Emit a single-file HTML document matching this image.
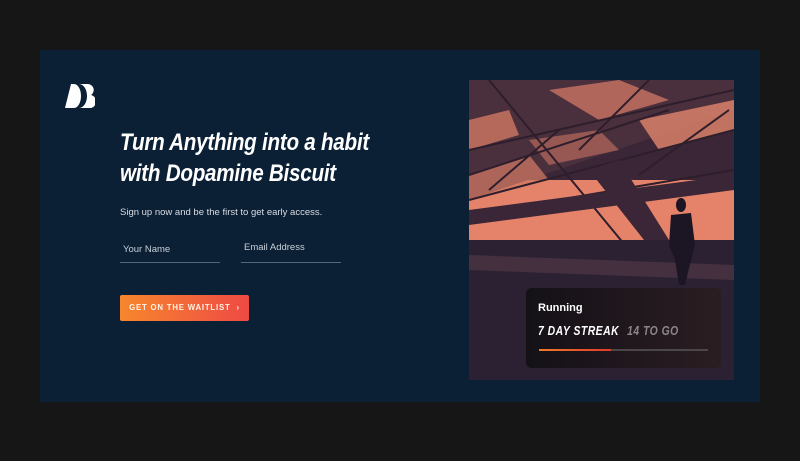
<!DOCTYPE html>
<html><head><meta charset="utf-8"><style>
*{margin:0;padding:0;box-sizing:border-box}
body{width:800px;height:461px;background:#161616;position:relative;overflow:hidden;font-family:"Liberation Sans",sans-serif}
.panel{position:absolute;left:40px;top:50px;width:720px;height:352px;background:#0b1f35}
.logo{position:absolute;left:65px;top:84px}
h1{position:absolute;left:120px;top:127px;color:#fff;font-style:italic;font-weight:700;font-size:24px;line-height:31px;letter-spacing:-0.3px;transform:scaleX(0.86);transform-origin:left;white-space:nowrap}
.sub{position:absolute;left:120px;top:207px;color:#d8dde4;font-size:9.5px}
.field{position:absolute;top:244px;width:100px;height:19px;border-bottom:1px solid #55657a;color:#c9d0d8;font-size:9.5px;padding-left:3px}
.btn{position:absolute;left:120px;top:295px;width:129px;height:26px;border-radius:2px;background:linear-gradient(90deg,#f7862d,#ee4a44);font-size:7.8px;font-weight:700;letter-spacing:0.8px;line-height:26px;text-align:center;color:#fff3e8}
.photo{position:absolute;left:469px;top:80px;width:265px;height:300px;overflow:hidden;background:#3a2636}
.card{position:absolute;left:526px;top:288px;width:195px;height:80px;border-radius:5px;background:linear-gradient(90deg,#141117,#2a1d22);}
.card .t{position:absolute;left:12px;top:14px;color:#fff;font-size:11px;font-weight:700}
.card .s{position:absolute;left:12px;top:35px;color:#fff;font-size:13px;font-weight:700;font-style:italic;letter-spacing:0.6px;transform:scaleX(0.8);transform-origin:left;white-space:nowrap}
.card .s span{color:#8c8588;margin-left:10px}
.bar{position:absolute;left:13px;top:61px;width:169px;height:2px;background:#4b4648}
.bar i{position:absolute;left:0;top:0;width:72px;height:2px;background:linear-gradient(90deg,#f07a2a,#e23a2a)}
</style></head><body>
<div class="panel"></div>
<svg class="logo" width="30" height="24" viewBox="0 0 30 24"><path d="M6 0 H9 A7 12 0 0 1 9 24 H0 Z" fill="#fff"/><path d="M14 0 H23 A6 6 0 0 1 26 11 A6.5 6.5 0 0 1 23 24 H14 A8 12 0 0 0 14 0 Z" fill="#fff"/></svg>
<h1>Turn Anything into a habit<br>with Dopamine Biscuit</h1>
<div class="sub">Sign up now and be the first to get early access.</div>
<div class="field" style="left:120px">Your Name</div>
<div class="field" style="left:241px;top:242px;height:21px">Email Address</div>
<div class="btn">GET ON THE WAITLIST &nbsp;›</div>
<div class="photo">
<svg width="265" height="300" viewBox="0 0 265 300">
<rect x="0" y="100" width="265" height="70" fill="#e5836a"/>
<polygon points="0,0 265,0 265,30 0,120" fill="#4a2f3d"/>
<polygon points="80,10 150,0 200,20 130,40" fill="#c97462" opacity="0.8"/>
<polygon points="170,40 265,20 265,50 190,70" fill="#d98068" opacity="0.85"/>
<polygon points="0,40 40,30 50,55 0,70" fill="#cf7863" opacity="0.8"/>
<polygon points="0,95 60,75 80,100 0,120" fill="#cf7863" opacity="0.75"/>
<polygon points="60,60 130,50 150,70 80,85" fill="#b86a5c" opacity="0.7"/>
<g stroke="#2e1e2c" stroke-width="2" fill="none">
<path d="M20,0 L160,170"/><path d="M0,70 L265,10"/><path d="M0,120 L265,50"/><path d="M0,95 L200,30"/><path d="M110,70 L180,0"/><path d="M170,95 L260,30"/><path d="M20,110 L90,50"/><path d="M0,135 L265,90"/>
</g>
<polygon points="120,90 150,80 200,160 175,160" fill="#3a2636"/>
<polygon points="0,130 265,95 265,110 0,145" fill="#3a2636"/>
<polygon points="0,160 265,160 265,300 0,300" fill="#2b2133"/>
<polygon points="0,175 265,185 265,200 0,190" fill="#4c3442" opacity="0.8"/>
<ellipse cx="212" cy="125" rx="5" ry="7" fill="#1c1524"/>
<path d="M202,135 L222,133 L226,165 L222,180 L216,205 L210,205 L206,180 L200,165 Z" fill="#1c1524"/>
</svg>
</div>
<div class="card"><div class="t">Running</div><div class="s">7 DAY STREAK<span>14 TO GO</span></div><div class="bar"><i></i></div></div>
</body></html>
